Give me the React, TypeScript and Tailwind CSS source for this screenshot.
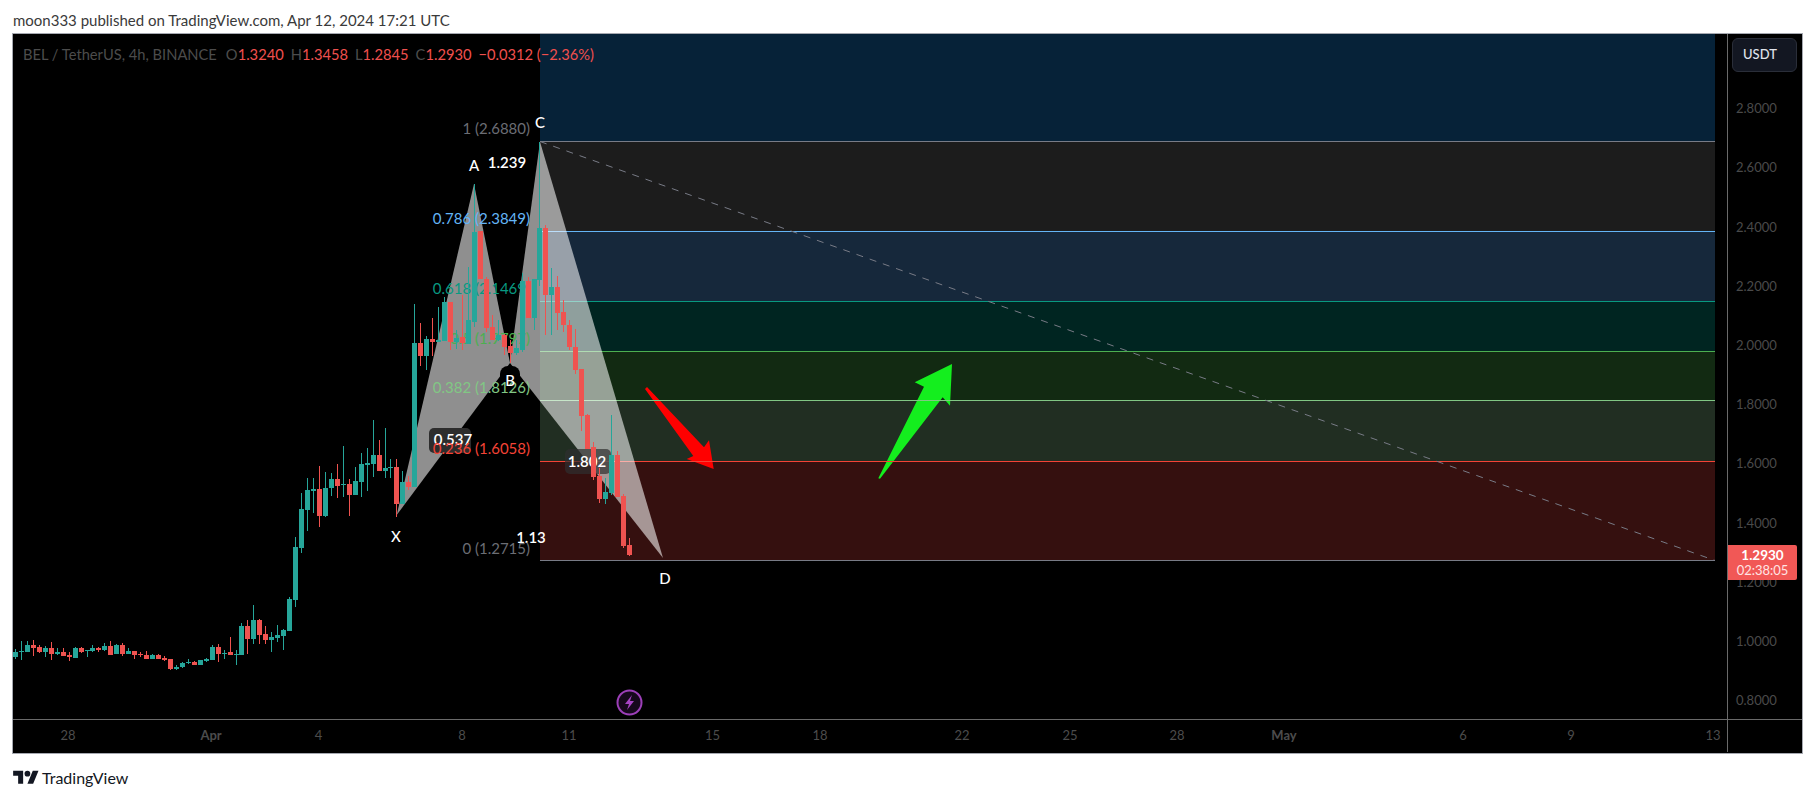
import React from "react";

type C = [string, number, number, number, number];

const a: C[] = ([
  ["g",276,290,268,296],["g",273,275,243,299],["g",255,275,243,275],["r",255,264,240,288],["r",261,276,255,279],
  ["g",264,276,258,291],["r",264,282,246,300],["g",276,282,264,285],["r",276,288,264,288],["r",285,291,276,303],
  ["g",264,294,262,294],["r",264,276,261,279],["g",270,272,270,291],["g",264,273,255,276],["r",264,270,261,276],
  ["g",258,270,249,273],["r",258,285,243,285],["g",255,282,252,282],["r",255,282,249,288],["g",273,282,264,282],
  ["r",273,285,273,297],["r",282,285,276,291],["r",285,297,273,297],["g",285,297,282,297],["r",285,297,282,297],
  ["r",294,300,288,303],["r",297,327,297,330],["g",321,327,315,330],["g",309,321,306,324],["g",306,309,297,312],
  ["r",306,315,303,315],["g",300,315,300,315],["g",297,303,294,306],["g",261,300,255,300],["r",261,282,252,306],
  ["g",279,281,270,297],["r",276,285,231,285],["g",283,285,270,315],["g",198,285,189,285],["r",198,237,180,282],
  ["g",180,237,135,252],["r",180,225,177,252],["r",222,240,198,252],["g",231,240,216,276],["g",225,234,195,246],
  ["g",210,228,207,270],["g",117,213,111,213],
] as C[]).map(([c, t, b, wt, wb]) => [c, 560 + t / 3, 560 + b / 3, 560 + wt / 3, 560 + wb / 3] as C);

const b: C[] = ([
  ["g",687,804,640,818],["g",630,690,595,752],["g",627,633,595,700],["r",627,708,558,741],["g",624,708,576,710],
  ["g",597,624,579,648],["r",597,618,552,654],["g",612,615,498,651],["r",612,645,597,708],["g",603,645,561,645],
  ["g",552,606,519,651],["g",549,555,504,633],["g",525,552,420,591],["r",525,573,480,573],["g",564,573,444,594],
  ["g",561,564,537,594],["r",561,672,537,711],["g",606,672,573,672],["r",606,621,588,630],["g",189,621,72,621],
  ["r",189,228,129,258],["g",177,228,168,270],["r",177,186,114,228],["g",181,185,81,186],["g",66,183,51,183],
  ["r",66,186,66,210],["g",174,186,150,207],
] as C[]).map(([c, t, bt, wt, wb]) => [c, 280 + t / 3, 280 + bt / 3, 280 + wt / 3, 280 + wb / 3] as C);

const candles: C[] = [
  ...a,
  ["g", 546.7, 600, 536.7, 607],
  ...b,
  ["r",337,343,295,350],["g",320,344,267,344],["g",232,322,184,327],["r",231,279,231,279],["r",279,328,277,332],
  ["r",327,340,315,340],["g",335,340,320,341],["r",335,347,334,355],["r",346,353,340,363],["g",348,353,340,355],
  ["g",281,350,273,352],["r",281,318,277,318],["g",279,318,279,330],["g",228,280,142,286],["r",228,295,225,335],
  ["g",287,295,268,335],["r",287,313,276,330],["r",312,325,300,332],["r",325,347,320,350],["r",347,370,329,374],
  ["r",369,416,369,431],["r",415,449,414,449],["r",447,477,442,480],["r",476,499,468,503],["g",492,499,478,504],
  ["g",455,493,415,495],["r",455,497,451,497],["r",496,546,494,548],["r",545,555,538,556],
];

const fibBands = [
  { y1: 34, y2: 141.5, fill: "fill-[#062238]" },
  { y1: 141.5, y2: 231.5, fill: "fill-[#1c1c1c]" },
  { y1: 231.5, y2: 301.5, fill: "fill-[#16283b]" },
  { y1: 301.5, y2: 351.5, fill: "fill-[#002521]" },
  { y1: 351.5, y2: 400.5, fill: "fill-[#122a12]" },
  { y1: 400.5, y2: 461.5, fill: "fill-[#212e22]" },
  { y1: 461.5, y2: 560.5, fill: "fill-[#35100f]" },
];

const fibLines = [
  { y: 141.5, stroke: "stroke-[#787b86]" },
  { y: 231.5, stroke: "stroke-[#64b5f6]" },
  { y: 301.5, stroke: "stroke-[#089981]" },
  { y: 351.5, stroke: "stroke-[#4caf50]" },
  { y: 400.5, stroke: "stroke-[#81c784]" },
  { y: 461.5, stroke: "stroke-[#f44336]" },
  { y: 560.5, stroke: "stroke-[#787b86]" },
];

const fibLabels = [
  { y: 127.5, t: "1 (2.6880)", fill: "fill-[#6b6d74]" },
  { y: 217.5, t: "0.786 (2.3849)", fill: "fill-[#64b5f6]" },
  { y: 288, t: "0.618 (2.1469)", fill: "fill-[#089981]" },
  { y: 338, t: "0.5 (1.9797)", fill: "fill-[#4caf50]" },
  { y: 387, t: "0.382 (1.8126)", fill: "fill-[#81c784]" },
  { y: 448, t: "0.236 (1.6058)", fill: "fill-[#f44336]" },
  { y: 547.5, t: "0 (1.2715)", fill: "fill-[#6b6d74]" },
];

const letters = [
  { x: 396, y: 535.5, t: "X" },
  { x: 474, y: 165, t: "A" },
  { x: 510, y: 380, t: "B" },
  { x: 540, y: 122, t: "C" },
  { x: 665, y: 578, t: "D" },
];

const ratios = [
  { x: 453, y: 439, t: "0.537" },
  { x: 507, y: 162, t: "1.239" },
  { x: 587, y: 461, t: "1.802" },
  { x: 531, y: 537, t: "1.13" },
];

const prices = ["2.8000","2.6000","2.4000","2.2000","2.0000","1.8000","1.6000","1.4000","1.2000","1.0000","0.8000"];

const ticks: [number, string, boolean][] = [
  [68,"28",false],[211,"Apr",true],[318.5,"4",false],[462,"8",false],[569,"11",false],[712.5,"15",false],
  [820,"18",false],[962,"22",false],[1070,"25",false],[1177,"28",false],[1284,"May",true],[1463,"6",false],
  [1571,"9",false],[1713,"13",false],
];

function Chart() {
  return (
    <svg viewBox="13 34 1714 685" className="block w-[1714px] h-[685px] bg-black font-['Lato',sans-serif]">
      {fibBands.map((f) => (
        <rect key={f.y1} x={540} y={f.y1} width={1175} height={f.y2 - f.y1} className={f.fill} />
      ))}
      <polygon points="645,389 647,387 704,447.3 709,440.3 713.7,469 686.7,459 693.3,456" className="fill-[#ff0000]" />
      <polygon points="878.3,478.3 880,478.7 942.7,397.3 950,405.7 952,364 914.7,382.3 924,386.7" className="fill-[#14ee1e]" />
      {fibLines.map((l) => (
        <line key={l.y} x1={540} x2={1715} y1={l.y} y2={l.y} strokeWidth={1} className={l.stroke} />
      ))}
      <line x1={540} y1={141.5} x2={1715} y2={560.5} strokeDasharray="7 7" strokeWidth={1} className="stroke-[#787b86]" />
      <polygon points="396.7,515 474,184 510,363" fill="#ffffff" fillOpacity={0.56} />
      <polygon points="510,363 540,141.7 663,558" fill="#ffffff" fillOpacity={0.56} />
      <rect x={429} y={428} width={42} height={25} rx={5} className="fill-[#2d2d2d]" />
      <rect x={500} y={366} width={20} height={21} rx={8} className="fill-black" />
      <rect x={565} y={449} width={46} height={25} rx={5} fill="#2f2f2f" fillOpacity={0.7} />
      {ratios.map((l) => (
        <text key={l.t} x={l.x} y={l.y} textAnchor="middle" dominantBaseline="central" className="text-[15px] font-semibold fill-white">
          {l.t}
        </text>
      ))}
      {fibLabels.map((l) => (
        <text key={l.t} x={530} y={l.y} textAnchor="end" dominantBaseline="central" className={`text-[15px] ${l.fill}`}>
          {l.t}
        </text>
      ))}
      {letters.map((l) => (
        <text key={l.t} x={l.x} y={l.y} textAnchor="middle" dominantBaseline="central" className="text-[15px] font-medium fill-white">
          {l.t}
        </text>
      ))}
      {candles.map(([c, t, bt, wt, wb], i) => {
        const x = Math.round(15 + 5.96 * i);
        return (
          <g key={i} shapeRendering="crispEdges" className={c === "g" ? "fill-[#26a69a]" : "fill-[#ef5350]"}>
            <rect x={x} y={wt} width={1} height={Math.max(wb - wt, 1)} />
            <rect x={x - 2} y={t} width={5} height={Math.max(bt - t, 1)} />
          </g>
        );
      })}
      <circle cx={629.5} cy={702.5} r={12} strokeWidth={2} className="fill-[#16081c] stroke-[#9c3fb8]" />
      <polygon points="632,695 625,704 629,704 627,710 634,701 630,701" className="fill-[#a644c4]" />
    </svg>
  );
}

export default function App() {
  let prev = 13;
  return (
    <div className="w-[1815px] h-[798px] bg-white overflow-hidden font-['Lato',sans-serif]">
      <div className="h-[33px] pl-[13px] pt-[7px] text-[15px] leading-[26px] text-[#3a3a3a] whitespace-nowrap">
        moon333 published on TradingView.com, Apr 12, 2024 17:21 UTC
      </div>
      <div className="ml-[12px] w-[1791px] h-[721px] border border-[#a5a8b0] flex flex-col bg-black">
        <div className="flex h-[685px]">
          <div className="relative w-[1714px]">
            <Chart />
            <div className="absolute left-[10px] top-[12px] flex gap-[7px] text-[14.7px] leading-[16px] whitespace-nowrap text-[#4c4c4c]">
              <span className="mr-[2px]">BEL / TetherUS, 4h, BINANCE</span>
              <span>O<span className="text-[#f0504e]">1.3240</span></span>
              <span>H<span className="text-[#f0504e]">1.3458</span></span>
              <span>L<span className="text-[#f0504e]">1.2845</span></span>
              <span>C<span className="text-[#f0504e]">1.2930</span></span>
              <span className="text-[#f0504e]">−0.0312 (−2.36%)</span>
            </div>
          </div>
          <div className="relative flex-1 border-l border-[#6a6a6a]">
            <div className="ml-[4px] mt-[4px] w-[65px] h-[34px] rounded-[6px] border border-[#2a2e39] bg-[#131722] pl-[10px] flex items-center text-[13px] font-medium text-[#e0e3eb]">
              USDT
            </div>
            <div className="mt-[7.4px] pl-[8px] flex flex-col text-[13px] text-[#4a4a4a]">
              {prices.map((p) => (
                <div key={p} className="h-[59.2px] flex items-center">{p}</div>
              ))}
            </div>
            <div className="absolute left-0 top-[511px] w-[69px] h-[35px] rounded-r-[2px] bg-[#f15856] flex flex-col items-center justify-center text-white leading-[15px]">
              <span className="text-[13.5px] font-bold">1.2930</span>
              <span className="text-[13px] text-[#ffe5e4]">02:38:05</span>
            </div>
          </div>
        </div>
        <div className="flex h-[33px] border-t border-[#6a6a6a]">
          <div className="flex items-center h-full w-[1714px] text-[13px] text-[#4c4c4c]">
            {ticks.map(([c, t, bold]) => {
              const ml = c - prev;
              prev = c;
              return (
                <div key={c} style={{ marginLeft: ml }} className={`w-0 flex justify-center whitespace-nowrap ${bold ? "font-bold" : ""}`}>
                  {t}
                </div>
              );
            })}
          </div>
          <div className="flex-1 border-l border-[#6a6a6a]" />
        </div>
      </div>
      <div className="pl-[13px] pt-[14px] flex items-center gap-[3px]">
        <svg viewBox="0 0 36 28" className="w-[26px] h-[20px] fill-[#131722]">
          <path d="M14 22H7V11H0V4h14v18zM28 22h-8l7.5-18h8L28 22z" />
          <circle cx="20" cy="8" r="4" />
        </svg>
        <span className="text-[16px] leading-[20px] text-[#131722]">TradingView</span>
      </div>
    </div>
  );
}
